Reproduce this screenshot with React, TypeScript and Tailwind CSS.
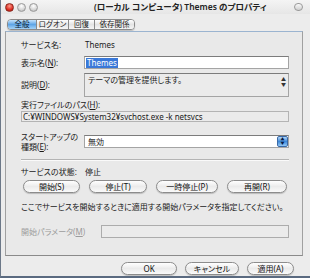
import React from 'react';

const font = { fontFamily: '"Noto Sans", "Noto Sans CJK JP", sans-serif' };

const AquaButton = ({ label, className = '' }: { label: string; className?: string }) => (
  <div
    className={`h-[13px] rounded-full border border-[#8c8c8c] bg-gradient-to-b from-[#ffffff] via-[#ebebeb] to-[#fafafa] shadow-[0_1px_1px_rgba(0,0,0,0.2)] flex items-center justify-center text-[8px] leading-none text-[#111] ${className}`}
  >
    {label}
  </div>
);

const tabs = [
  { label: '全般', w: 'w-[28px]' },
  { label: 'ログオン', w: 'w-[32px]' },
  { label: '回復', w: 'w-[26px]' },
  { label: '依存関係', w: 'w-[40px]' },
];

export default function App() {
  return (
    <div
      className="w-[310px] h-[278px] bg-[#ececec] flex flex-col border-l border-[#6c7888] border-b-2 border-b-[#5a6a80] overflow-hidden [font-feature-settings:'palt'] text-[#1a1a1a]"
      style={font}
    >
      {/* Title bar */}
      <div className="h-[14px] flex items-center pl-[4px] pr-[7px] bg-gradient-to-b from-[#f4f4f4] to-[#e6e6e6]">
        <div className="flex gap-[3px] items-center">
          <span className="w-[9px] h-[9px] rounded-full bg-[radial-gradient(circle_at_50%_30%,#ff9a8a,#d8261c_65%,#9a1810)] border border-[#8a2a20]" />
          <span className="w-[9px] h-[9px] rounded-full bg-[radial-gradient(circle_at_50%_30%,#ffffff,#d6d6d6_60%,#a8a8a8)] border border-[#9a9a9a]" />
          <span className="w-[9px] h-[9px] rounded-full bg-[radial-gradient(circle_at_50%_30%,#ffffff,#d6d6d6_60%,#a8a8a8)] border border-[#9a9a9a]" />
        </div>
        <div className="flex-1 pl-[56px] text-[8.5px] font-semibold text-[#222] leading-none whitespace-nowrap">
          (ローカル コンピュータ) Themes のプロパティ
        </div>
        <span className="w-[9px] h-[8px] rounded-full bg-gradient-to-b from-[#fafafa] to-[#cfcfcf] border border-[#9a9a9a]" />
      </div>

      {/* Tabs */}
      <div className="flex pl-[6px] pt-[5px]">
        <div className="flex h-[11px] rounded-[4px] border border-[#8a8a8a] overflow-hidden shadow-[0_1px_1px_rgba(0,0,0,0.2)]">
          {tabs.map((t, i) => (
            <div
              key={t.label}
              className={`${t.w} flex items-center justify-center text-[7.5px] leading-none ${
                i === 0
                  ? 'bg-gradient-to-b from-[#c4e2fb] via-[#5fa5e6] to-[#a4d3f8] text-[#0a1a30]'
                  : 'bg-gradient-to-b from-[#ffffff] via-[#e4e4e4] to-[#f6f6f6] text-[#222] border-l border-[#8a8a8a]'
              }`}
            >
              {t.label}
            </div>
          ))}
        </div>
      </div>

      {/* Panel */}
      <div className="ml-[4px] mr-[7px] mt-[1px] h-[225px] border border-[#a0a0a0] border-t-[#9bb4d0] border-b-[#8a8a8a] bg-[#e9e9e9] pl-[15px] pr-[13px] text-[8px] leading-none">
        <div className="flex items-center h-[12px] mt-[7px]">
          <div className="w-[64px]">サービス名:</div>
          <div>Themes</div>
        </div>
        <div className="flex items-center h-[13px] mt-[5px]">
          <div className="w-[63px]">表示名(<u>N</u>):</div>
          <div className="flex-1 h-[13px] border border-[#a4a4a4] border-t-[#7c7c7c] bg-white pl-[1px] flex items-center">
            <span className="bg-[#3a78d8] text-white px-[1px] leading-[10px]">Themes</span>
          </div>
        </div>
        <div className="flex mt-[4px]">
          <div className="w-[63px] pt-[8px]">説明(<u>D</u>):</div>
          <div className="flex-1 h-[24px] border border-[#a4a4a4] border-t-[#7c7c7c] bg-[#ebebeb] flex">
            <div className="flex-1 pl-[3px] pt-[2px]">テーマの管理を提供します。</div>
            <div className="w-[9px] flex flex-col items-center pt-[3px] text-[5px] leading-[5px] text-[#333]">
              <span>▲</span>
              <span>▼</span>
            </div>
          </div>
        </div>
        <div className="mt-[2px] h-[12px] flex items-center">実行ファイルのパス(<u>H</u>):</div>
        <div className="h-[11px] border border-[#b4b4b4] bg-[#ebebeb] flex items-center pl-[1px] text-[8px] leading-none">
          C:¥WINDOWS¥System32¥svchost.exe -k netsvcs
        </div>
        <div className="flex mt-[10px]">
          <div className="w-[63px] leading-[10px]">
            スタートアップの
            <br />
            種類(<u>E</u>):
          </div>
          <div className="flex-1 h-[13px] mt-[3px] border border-[#a4a4a4] border-t-[#7c7c7c] bg-white flex items-center">
            <div className="flex-1 pl-[3px]">無効</div>
            <div className="w-[11px] h-[11px] bg-gradient-to-b from-[#b4d8f8] via-[#3d89d8] to-[#94c8f4] rounded-[2px] border border-[#3a6aa8] flex flex-col items-center justify-center text-[4px] leading-[4px] text-[#0a1a40]">
              <span>▲</span>
              <span>▼</span>
            </div>
          </div>
        </div>
        <div className="mt-[7px] border-t border-[#b4b4b4] border-b border-b-[#fafafa]" />
        <div className="flex items-center h-[12px] mt-[5px]">
          <div className="w-[64px]">サービスの状態:</div>
          <div>停止</div>
        </div>
        <div className="flex gap-[9px] mt-[2px] pl-[2px]">
          <AquaButton label="開始(S)" className="w-[57px]" />
          <AquaButton label="停止(T)" className="w-[58px]" />
          <AquaButton label="一時停止(P)" className="w-[62px]" />
          <AquaButton label="再開(R)" className="w-[60px]" />
        </div>
        <div className="mt-[8px] h-[12px] flex items-center whitespace-nowrap">
          ここでサービスを開始するときに適用する開始パラメータを指定してください。
        </div>
        <div className="flex items-center mt-[12px]">
          <div className="w-[80px] text-[#9c9c9c]">開始パラメータ(<u>M</u>)</div>
          <div className="flex-1 h-[13px] border border-[#acacac] bg-[#ebebeb]" />
        </div>
      </div>

      {/* Bottom buttons */}
      <div className="flex justify-end gap-[8px] pr-[16px] pt-[6px]">
        <AquaButton label="OK" className="w-[56px]" />
        <AquaButton label="キャンセル" className="w-[54px]" />
        <AquaButton label="適用(A)" className="w-[47px]" />
      </div>
    </div>
  );
}
